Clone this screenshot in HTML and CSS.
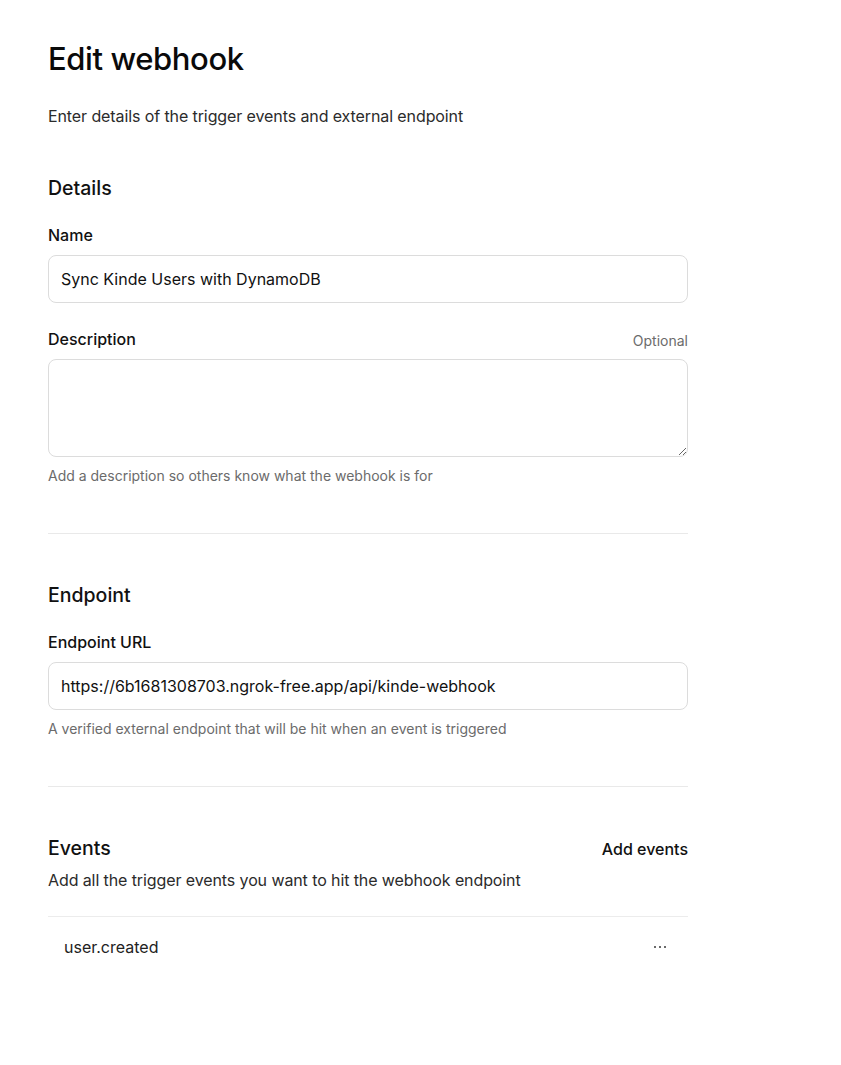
FILE: index.html
```html
<!DOCTYPE html>
<html lang="en">
<head>
<meta charset="utf-8">
<title>Edit webhook</title>
<link rel="stylesheet" href="styles.css">
</head>
<body>
<main class="page">
  <h1 class="title">Edit webhook</h1>
  <p class="subtitle">Enter details of the trigger events and external endpoint</p>

  <section class="section section-details">
    <h2 class="section-title">Details</h2>
    <div class="field field-name">
      <label class="label" for="name">Name</label>
      <input class="input" id="name" type="text" value="Sync Kinde Users with DynamoDB">
    </div>
    <div class="field field-desc">
      <div class="label-row">
        <label class="label" for="desc">Description</label>
        <span class="optional">Optional</span>
      </div>
      <textarea class="textarea" id="desc"></textarea>
      <p class="hint">Add a description so others know what the webhook is for</p>
    </div>
  </section>

  <hr class="divider divider-1">

  <section class="section section-endpoint">
    <h2 class="section-title">Endpoint</h2>
    <div class="field field-url">
      <label class="label" for="url">Endpoint URL</label>
      <input class="input" id="url" type="text" value="https://6b1681308703.ngrok-free.app/api/kinde-webhook">
      <p class="hint">A verified external endpoint that will be hit when an event is triggered</p>
    </div>
  </section>

  <hr class="divider divider-2">

  <section class="section section-events">
    <div class="events-head">
      <h2 class="section-title">Events</h2>
      <button class="link-btn" type="button">Add events</button>
    </div>
    <p class="events-sub">Add all the trigger events you want to hit the webhook endpoint</p>
    <ul class="event-list">
      <li class="event-row">
        <span class="event-name">user.created</span>
        <button class="more" type="button" aria-label="More options">
          <svg width="14" height="4" viewBox="0 0 14 4" aria-hidden="true">
            <rect x="1" y="1" width="2" height="2" fill="#6a6a6a"/>
            <rect x="6" y="1" width="2" height="2" fill="#6a6a6a"/>
            <rect x="11" y="1" width="2" height="2" fill="#6a6a6a"/>
          </svg>
        </button>
      </li>
    </ul>
  </section>
</main>
</body>
</html>
```

FILE: styles.css
```css
* { box-sizing: border-box; }
html, body { margin: 0; padding: 0; background: #fff; }
body {
  font-family: Inter, "Noto Sans", "Liberation Sans", sans-serif;
  color: #0f0f0f;
}
.page {
  width: 640px;
  margin-left: 48px;
  padding-top: 38px;
}
.title {
  margin: 0;
  font-size: 31px;
  font-weight: 500;
  line-height: 42px;
  letter-spacing: -0.4px;
  color: #0a0a0a;
}
.subtitle {
  margin: 25px 0 0;
  font-size: 16px;
  line-height: 22px;
  letter-spacing: -0.1px;
  color: #2b2b2b;
}
.section-title {
  margin: 0;
  font-size: 19.5px;
  font-weight: 500;
  line-height: 26px;
  color: #111;
}
.section-details { margin-top: 48px; }
.field { margin-top: 22px; }
.field-name { margin-top: 23px; }
.field-desc { margin-top: 25px; }
.field-url { margin-top: 23px; }
.label {
  display: block;
  font-size: 16px;
  font-weight: 470;
  line-height: 22px;
  color: #111;
}
.label-row {
  display: flex;
  justify-content: space-between;
  align-items: baseline;
}
.optional {
  font-size: 14px;
  color: #6b6b6b;
  position: relative;
  top: 1px;
}
.input, .textarea {
  display: block;
  width: 100%;
  margin-top: 9px;
  border: 1px solid #dcdcdc;
  border-radius: 8px;
  font-family: inherit;
  font-size: 16px;
  color: #111;
  background: #fff;
  outline: none;
}
.input {
  height: 48px;
  padding: 0 12px;
}
.textarea {
  height: 98px;
  padding: 10px 12px;
  resize: vertical;
}
.hint {
  margin: 9px 0 0;
  font-size: 14px;
  line-height: 20px;
  color: #6b6b6b;
}
.divider {
  border: 0;
  border-top: 1px solid #e9e9e9;
  height: 0;
}
.divider-1 { margin: 47px 0 0; }
.divider-2 { margin: 47px 0 0; }
.section-endpoint { margin-top: 48px; }
.section-events { margin-top: 48px; }
.events-head {
  display: flex;
  justify-content: space-between;
  align-items: baseline;
}
.link-btn {
  border: 0;
  background: none;
  padding: 0;
  font-family: inherit;
  font-size: 16px;
  font-weight: 470;
  color: #111;
  cursor: pointer;
}
.events-sub {
  margin: 8px 0 0;
  font-size: 16px;
  line-height: 22px;
  letter-spacing: -0.1px;
  color: #2b2b2b;
}
.event-list {
  list-style: none;
  margin: 25px 0 0;
  padding: 0;
  border-top: 1px solid #ececec;
}
.event-row {
  display: flex;
  justify-content: space-between;
  align-items: center;
  padding: 20px 20px 0 16px;
}
.event-name {
  font-size: 16px;
  color: #222;
}
.more {
  display: flex;
  align-items: center;
  border: 0;
  background: none;
  padding: 0;
  margin-right: 1px;
  cursor: pointer;
}
.more svg { display: block; }
```
